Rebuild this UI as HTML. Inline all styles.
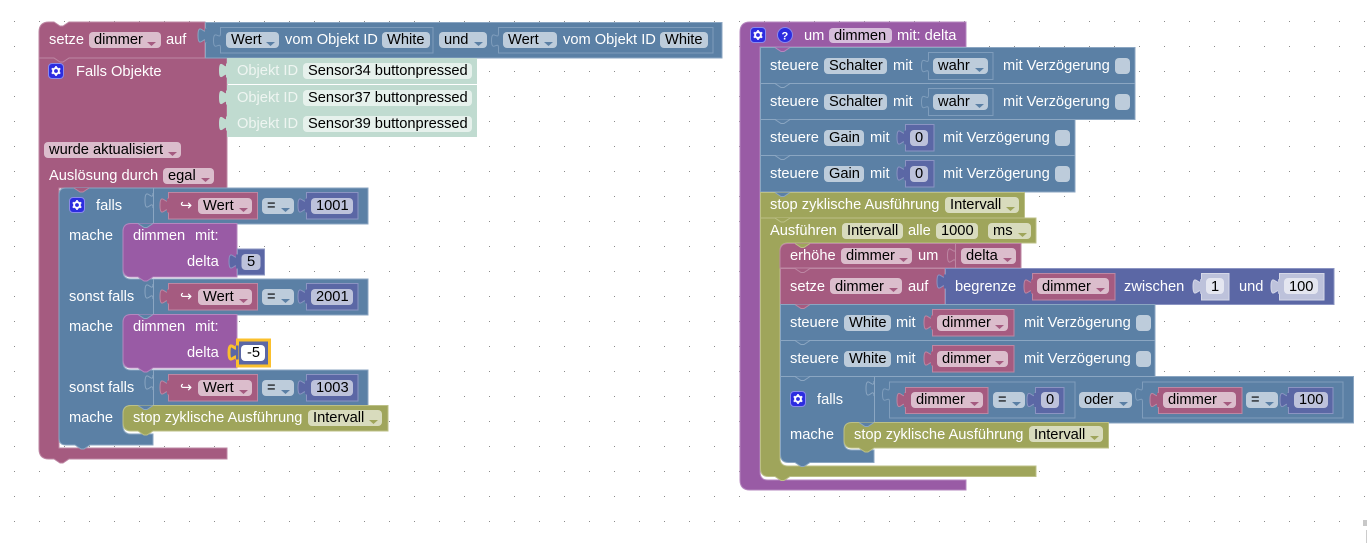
<!DOCTYPE html>
<html><head><meta charset="utf-8"><style>
html,body{margin:0;padding:0;background:#fff;width:1367px;height:543px;overflow:hidden}
svg{display:block}
text{font:14.67px "Liberation Sans",Arial,sans-serif;white-space:pre}
.w{fill:#fff}.k{fill:#000}.wf{fill:#eef5f1}
.P{fill:#a55b80;stroke:#bd87a3}.B{fill:#5b80a5;stroke:#8ba6c2}.U{fill:#995ba5;stroke:#b587bf}.O{fill:#9fa55b;stroke:#bcc087}.I{fill:#5b67a5;stroke:#8b94c2}
.L{fill:#bdc2db;stroke:#d5d8e8}
.ol{fill:none;stroke:#7f9dbc}
.fp{fill:#dbbdcc}.fb{fill:#bdccdb}.fo{fill:#d8dbbd}.fi{fill:#bdc2db}.fm{fill:#e6f1ec}.fu{fill:#d6bddb}.fl{fill:#e4e6f0}
</style></head><body>
<svg width="1367" height="543" viewBox="0 0 1367 543" xmlns="http://www.w3.org/2000/svg">
<defs>
<pattern id="d" x="14" y="21" width="25" height="25" patternUnits="userSpaceOnUse"><rect width="1" height="1" fill="#8a8a8a"/></pattern>
<g id="t"><path d="M0 0c0,10 -8,-8 -8,7.5 s 8,-2.5 8,7.5"/><rect x="-1" y="0.500" width="2.500" height="14" stroke="none"/></g>
<path id="n" d="M0 0l6 4h3l6-4"/>
<path id="a" d="M0 0h9l-4.5 4z"/>
<g id="g"><rect x=".5" y=".5" width="15" height="15" rx="3.5" fill="#2c2ce0" stroke="#8a8aec"/><circle cx="8" cy="8" r="2.9" fill="none" stroke="#fff" stroke-width="2"/><path d="M8 3v10M3.7 5.5l8.6 5M3.7 10.5l8.6-5" stroke="#fff" stroke-width="1.6" stroke-dasharray="1.8 6.4"/></g>
</defs>
<rect width="1367" height="543" fill="url(#d)"/>
<rect x="1363" y="520" width="4" height="6" fill="#c8c8c8"/><rect x="1366" y="530" width="1" height="13" fill="#ccc"/>

<!-- LEFT STACK -->
<path class="P" d="M49 22H54l6 4h3l6-4H205V58H227V188H59V448H227V459H69l-6 4h-3l-6-4H49q-10 0-10-10V32q0-10 10-10z"/>
<path d="M39.5 58H54l6 4h3l6-4H205" fill="none" stroke="#bd87a3"/>
<rect class="B" x="205.500" y="22.500" width="516.500" height="35.500"/>
<use href="#t" x="206" y="28" class="B"/>
<path class="ol" d="M220.500 27.500h212.500v25.500h-212.500v-5c0-8-7 5-7-7.500s7 1 7-7.500z"/>
<path class="ol" d="M498.500 27.500h214.500v25.500h-214.500v-5c0-8-7 5-7-7.500s7 1 7-7.500z"/>
<rect class="fb" x="226" y="32" width="53" height="16" rx="4"/><rect class="fb" x="382" y="32" width="48" height="16" rx="4"/><rect class="fb" x="439" y="32" width="48" height="16" rx="4"/><rect class="fb" x="503" y="32" width="54" height="16" rx="4"/><rect class="fb" x="660" y="32" width="48" height="16" rx="4"/>
<g fill="#5b80a5"><use href="#a" x="266" y="42"/><use href="#a" x="474" y="42"/><use href="#a" x="544" y="42"/></g>
<text class="w" x="49" y="44">setze</text><rect class="fp" x="89" y="32" width="72" height="16" rx="4"/><text class="k" x="94" y="44">dimmer</text><use href="#a" x="147" y="42" fill="#a55b80"/><text class="w" x="166" y="44">auf</text>
<text class="k" x="231" y="44">Wert</text><text class="w" x="285" y="44">vom Objekt ID</text><text class="k" x="387" y="44">White</text><text class="k" x="444" y="44">und</text><text class="k" x="508" y="44">Wert</text><text class="w" x="563" y="44">vom Objekt ID</text><text class="k" x="665" y="44">White</text>

<use href="#g" x="48" y="63"/><text class="w" x="76" y="76">Falls Objekte</text>
<g fill="#c0dbd0"><rect x="227" y="58" width="250" height="26"/><rect x="227" y="85" width="250" height="52"/><use href="#t" x="227" y="63"/><use href="#t" x="227" y="90"/><use href="#t" x="227" y="116"/></g>
<rect class="fm" x="303" y="63" width="169" height="16" rx="4"/><rect class="fm" x="303" y="90" width="169" height="16" rx="4"/><rect class="fm" x="303" y="116" width="169" height="16" rx="4"/>
<text class="wf" x="237" y="75">Objekt ID</text><text class="wf" x="237" y="102">Objekt ID</text><text class="wf" x="237" y="128">Objekt ID</text>
<text class="k" x="308" y="75">Sensor34 buttonpressed</text><text class="k" x="308" y="102">Sensor37 buttonpressed</text><text class="k" x="308" y="128">Sensor39 buttonpressed</text>
<rect class="fp" x="44" y="142" width="137" height="16" rx="4"/><text class="k" x="49" y="154">wurde aktualisiert</text><use href="#a" x="168" y="152" fill="#a55b80"/>
<text class="w" x="49" y="180">Auslösung durch</text><rect class="fp" x="163" y="168" width="51" height="16" rx="4"/><text class="k" x="168" y="180">egal</text><use href="#a" x="201" y="178" fill="#a55b80"/>

<path class="B" d="M66 188H368V224H131q-8 0-8 8V271q0 8 8 8H368V315H131q-8 0-8 8V362q0 8 8 8H368V405.500H131q-8 0-8 8V426q0 8 8 8H153V445H90l-6 4h-3l-6-4H66q-7 0-7-7V195q0-7 7-7z"/>
<use href="#n" x="74" y="188" class="P"/>
<path d="M153.500 188v36M153.500 279v36M153.500 370v36" stroke="#8ba6c2" fill="none"/>
<g fill="none" stroke="#8ba6c2"><use href="#t" x="153" y="193"/><use href="#t" x="153" y="284"/><use href="#t" x="153" y="375"/></g>
<use href="#g" x="69" y="197"/>
<text class="w" x="96" y="210">falls</text><text class="w" x="69" y="240">mache</text><text class="w" x="69" y="301">sonst falls</text><text class="w" x="69" y="331">mache</text><text class="w" x="69" y="392">sonst falls</text><text class="w" x="69" y="422">mache</text>

<!-- left rows -->
<g>
<rect class="P" x="168.500" y="192.500" width="89" height="26.500"/><use href="#t" x="168" y="198" class="P"/>
<text class="w" x="180" y="210">↪</text>
<rect class="fp" x="198" y="198" width="54" height="16" rx="4"/><text class="k" x="203" y="210">Wert</text><use href="#a" x="239" y="208" fill="#a55b80"/>
<rect class="fb" x="262" y="198" width="32" height="16" rx="4"/><text class="k" x="267" y="210">=</text><use href="#a" x="281" y="208" fill="#5b80a5"/>
<rect class="I" x="306.500" y="192.500" width="51.500" height="26.500"/><use href="#t" x="306" y="198" class="I"/>
<rect class="fi" x="311" y="198" width="42" height="16" rx="4"/><text class="k" x="316" y="210">1001</text>
</g>
<g>
<rect class="P" x="168.500" y="283.500" width="89" height="26.500"/><use href="#t" x="168" y="289" class="P"/>
<text class="w" x="180" y="301">↪</text>
<rect class="fp" x="198" y="289" width="54" height="16" rx="4"/><text class="k" x="203" y="301">Wert</text><use href="#a" x="239" y="299" fill="#a55b80"/>
<rect class="fb" x="262" y="289" width="32" height="16" rx="4"/><text class="k" x="267" y="301">=</text><use href="#a" x="281" y="299" fill="#5b80a5"/>
<rect class="I" x="306.500" y="283.500" width="51.500" height="26.500"/><use href="#t" x="306" y="289" class="I"/>
<rect class="fi" x="311" y="289" width="42" height="16" rx="4"/><text class="k" x="316" y="301">2001</text>
</g>
<g>
<rect class="P" x="168.500" y="374.500" width="89" height="26.500"/><use href="#t" x="168" y="380" class="P"/>
<text class="w" x="180" y="392">↪</text>
<rect class="fp" x="198" y="380" width="54" height="16" rx="4"/><text class="k" x="203" y="392">Wert</text><use href="#a" x="239" y="390" fill="#a55b80"/>
<rect class="fb" x="262" y="380" width="32" height="16" rx="4"/><text class="k" x="267" y="392">=</text><use href="#a" x="281" y="390" fill="#5b80a5"/>
<rect class="I" x="306.500" y="374.500" width="51.500" height="26.500"/><use href="#t" x="306" y="380" class="I"/>
<rect class="fi" x="311" y="380" width="42" height="16" rx="4"/><text class="k" x="316" y="392">1003</text>
</g>

<!-- dimmen 1 -->
<path class="U" d="M131 223.500H237V277H153l-6 4h-3l-6-4H131q-8 0-8-8V231.500q0-8 8-8z"/>
<use href="#n" x="138" y="223.500" class="B"/>
<text class="w" x="133" y="240">dimmen</text><text class="w" x="195" y="240">mit:</text><text class="w" x="187" y="266">delta</text>
<rect class="I" x="237.500" y="249" width="27" height="26"/><use href="#t" x="237" y="254" class="I"/>
<rect class="fi" x="241.500" y="254" width="19" height="16" rx="4"/><text class="k" x="247" y="266">5</text>
<!-- dimmen 2 -->
<path class="U" d="M131 314.500H237V368H153l-6 4h-3l-6-4H131q-8 0-8-8V322.500q0-8 8-8z"/>
<use href="#n" x="138" y="314.500" class="B"/>
<text class="w" x="133" y="331">dimmen</text><text class="w" x="195" y="331">mit:</text><text class="w" x="187" y="357">delta</text>
<rect x="237.500" y="340" width="32" height="26" fill="#5b67a5" stroke="#fbc02d" stroke-width="3"/><use href="#t" x="237" y="345" fill="#5b67a5" stroke="#fbc02d" stroke-width="3"/>
<rect x="241" y="345" width="24" height="16" rx="4" fill="#fff"/><text class="k" x="247" y="357">-5</text>
<!-- stop -->
<path class="O" d="M131 405.500H388V431H153l-6 4h-3l-6-4H131q-8 0-8-8V413.500q0-8 8-8z"/>
<use href="#n" x="138" y="405.500" class="B"/>
<text class="w" x="133" y="422">stop zyklische Ausführung</text><rect class="fo" x="308" y="410" width="74" height="16" rx="4"/><text class="k" x="313" y="422">Intervall</text><use href="#a" x="369" y="420" fill="#9fa55b"/>

<!-- RIGHT STACK -->
<path class="U" d="M750 22H966V47H760V472q0 8 8 8H966V490H750q-10 0-10-10V32q0-10 10-10z"/>
<use href="#g" x="750" y="27"/>
<circle cx="785" cy="35" r="7.5" fill="#2c2ce0" stroke="#8a8aec"/><text x="781.500" y="39.500" style="font-size:11px;font-weight:bold" class="w">?</text>
<text class="w" x="804" y="40">um</text><rect class="fu" x="829" y="28" width="63" height="15" rx="4"/><text class="k" x="834" y="40">dimmen</text><text class="w" x="897" y="40">mit: delta</text>

<rect class="B" x="760.500" y="47.500" width="374.500" height="36"/><use href="#n" x="775" y="47.500" class="U"/>
<rect class="B" x="760.500" y="83.500" width="374.500" height="36"/><use href="#n" x="775" y="83.500" class="B"/>
<rect class="B" x="760.500" y="119.500" width="314.500" height="36"/><use href="#n" x="775" y="119.500" class="B"/>
<rect class="B" x="760.500" y="155.500" width="314.500" height="36.500"/><use href="#n" x="775" y="155.500" class="B"/>

<text class="w" x="770" y="70">steuere</text><rect class="fb" x="824" y="58" width="63" height="16" rx="4"/><text class="k" x="829" y="70">Schalter</text><text class="w" x="893" y="70">mit</text>
<path class="ol" d="M928.500 52.500h64.500v27h-64.500v-6c0-8-7 5-7-7.500s7 1 7-7.500z"/><rect class="fb" x="933" y="58" width="55" height="16" rx="4"/><text class="k" x="938" y="70">wahr</text><use href="#a" x="975" y="68" fill="#5b80a5"/>
<text class="w" x="1003" y="70">mit Verzögerung</text><rect class="fb" x="1115" y="58" width="15" height="16" rx="4"/>

<text class="w" x="770" y="106">steuere</text><rect class="fb" x="824" y="94" width="63" height="16" rx="4"/><text class="k" x="829" y="106">Schalter</text><text class="w" x="893" y="106">mit</text>
<path class="ol" d="M928.500 88.500h64.500v27h-64.500v-6c0-8-7 5-7-7.500s7 1 7-7.500z"/><rect class="fb" x="933" y="94" width="55" height="16" rx="4"/><text class="k" x="938" y="106">wahr</text><use href="#a" x="975" y="104" fill="#5b80a5"/>
<text class="w" x="1003" y="106">mit Verzögerung</text><rect class="fb" x="1115" y="94" width="15" height="16" rx="4"/>

<text class="w" x="770" y="142">steuere</text><rect class="fb" x="824" y="130" width="40" height="16" rx="4"/><text class="k" x="829" y="142">Gain</text><text class="w" x="870" y="142">mit</text>
<rect class="I" x="905.500" y="124.500" width="28.500" height="26.500"/><use href="#t" x="905" y="130" class="I"/><rect class="fi" x="910" y="130" width="18" height="16" rx="4"/><text class="k" x="915" y="142">0</text>
<text class="w" x="943" y="142">mit Verzögerung</text><rect class="fb" x="1055" y="130" width="15" height="16" rx="4"/>

<text class="w" x="770" y="178">steuere</text><rect class="fb" x="824" y="166" width="40" height="16" rx="4"/><text class="k" x="829" y="178">Gain</text><text class="w" x="870" y="178">mit</text>
<rect class="I" x="905.500" y="160.500" width="28.500" height="26.500"/><use href="#t" x="905" y="166" class="I"/><rect class="fi" x="910" y="166" width="18" height="16" rx="4"/><text class="k" x="915" y="178">0</text>
<text class="w" x="943" y="178">mit Verzögerung</text><rect class="fb" x="1055" y="166" width="15" height="16" rx="4"/>

<!-- olive -->
<rect class="O" x="760.500" y="192.500" width="264" height="25.500"/><use href="#n" x="775" y="192.500" class="B"/>
<text class="w" x="770" y="209">stop zyklische Ausführung</text><rect class="fo" x="945" y="197" width="74" height="16" rx="4"/><text class="k" x="950" y="209">Intervall</text><use href="#a" x="1006" y="207" fill="#9fa55b"/>
<path class="O" d="M760.500 218H1036V243H788q-8 0-8 8V458q0 8 8 8H1036V476.500H790l-6 4h-3l-6-4H768.500q-8 0-8-8z"/><use href="#n" x="775" y="218" class="O"/>
<text class="w" x="770" y="235">Ausführen</text><rect class="fo" x="842" y="223" width="61" height="16" rx="4"/><text class="k" x="847" y="235">Intervall</text><text class="w" x="908" y="235">alle</text><rect class="fo" x="936" y="223" width="42" height="16" rx="4"/><text class="k" x="941" y="235">1000</text><rect class="fo" x="988" y="223" width="43" height="16" rx="4"/><text class="k" x="993" y="235">ms</text><use href="#a" x="1018" y="233" fill="#9fa55b"/>

<!-- erhöhe -->
<path class="P" d="M788 243.500H1021V268H780V251.500q0-8 8-8z"/><use href="#n" x="795" y="243.500" class="O"/>
<path d="M955.500 243.500v25" stroke="#bd87a3" fill="none"/><use href="#t" x="955.500" y="248" fill="none" stroke="#bd87a3"/>
<text class="w" x="790" y="260">erhöhe</text><rect class="fp" x="841" y="248" width="71" height="16" rx="4"/><text class="k" x="846" y="260">dimmer</text><use href="#a" x="899" y="258" fill="#a55b80"/><text class="w" x="918" y="260">um</text><rect class="fp" x="961" y="248" width="55" height="16" rx="4"/><text class="k" x="966" y="260">delta</text><use href="#a" x="1003" y="258" fill="#a55b80"/>
<!-- setze -->
<rect class="P" x="780.500" y="268.500" width="164.500" height="36"/><use href="#n" x="795" y="268.500" class="P"/>
<rect class="I" x="945.500" y="268.500" width="388.500" height="36"/><use href="#t" x="945" y="274" class="I"/>
<text class="w" x="790" y="291">setze</text><rect class="fp" x="830" y="278" width="72" height="16" rx="4"/><text class="k" x="835" y="291">dimmer</text><use href="#a" x="889" y="288" fill="#a55b80"/><text class="w" x="908" y="291">auf</text>
<text class="w" x="955" y="291">begrenze</text>
<rect class="P" x="1032.500" y="273.500" width="82.500" height="26.500"/><use href="#t" x="1032" y="279" class="P"/><rect class="fp" x="1037" y="278" width="72" height="16" rx="4"/><text class="k" x="1042" y="291">dimmer</text><use href="#a" x="1096" y="288" fill="#a55b80"/>
<text class="w" x="1124" y="291">zwischen</text>
<rect class="L" x="1201.500" y="273.500" width="27.500" height="26.500"/><use href="#t" x="1201" y="279" class="L"/><rect class="fl" x="1206" y="278" width="18" height="16" rx="4"/><text class="k" x="1211" y="291">1</text>
<text class="w" x="1239" y="291">und</text>
<rect class="L" x="1279.500" y="273.500" width="44.500" height="26.500"/><use href="#t" x="1279" y="279" class="L"/><rect class="fl" x="1284" y="278" width="34" height="16" rx="4"/><text class="k" x="1289" y="291">100</text>
<!-- steuere White -->
<rect class="B" x="780.500" y="304.500" width="374.500" height="36"/><use href="#n" x="795" y="304.500" class="P"/>
<rect class="B" x="780.500" y="340.500" width="374.500" height="36"/><use href="#n" x="795" y="340.500" class="B"/>
<text class="w" x="790" y="327">steuere</text><rect class="fb" x="844" y="315" width="47" height="16" rx="4"/><text class="k" x="849" y="327">White</text><text class="w" x="896" y="327">mit</text>
<rect class="P" x="932.500" y="309.500" width="81.500" height="26.500"/><use href="#t" x="932" y="315" class="P"/><rect class="fp" x="937" y="315" width="71" height="16" rx="4"/><text class="k" x="942" y="327">dimmer</text><use href="#a" x="995" y="325" fill="#a55b80"/>
<text class="w" x="1024" y="327">mit Verzögerung</text><rect class="fb" x="1136" y="315" width="15" height="16" rx="4"/>
<text class="w" x="790" y="363">steuere</text><rect class="fb" x="844" y="351" width="47" height="16" rx="4"/><text class="k" x="849" y="363">White</text><text class="w" x="896" y="363">mit</text>
<rect class="P" x="932.500" y="345.500" width="81.500" height="26.500"/><use href="#t" x="932" y="351" class="P"/><rect class="fp" x="937" y="351" width="71" height="16" rx="4"/><text class="k" x="942" y="363">dimmer</text><use href="#a" x="995" y="361" fill="#a55b80"/>
<text class="w" x="1024" y="363">mit Verzögerung</text><rect class="fb" x="1136" y="351" width="15" height="16" rx="4"/>
<!-- falls -->
<path class="B" d="M780.500 376.500H1353.500V423H852q-8 0-8 8V442q0 8 8 8H874V462.500H810l-6 4h-3l-6-4H788.500q-8 0-8-8z"/><use href="#n" x="795" y="376.500" class="B"/>
<path d="M874.500 377v46" stroke="#8ba6c2" fill="none"/><use href="#t" x="874" y="381" fill="none" stroke="#8ba6c2"/>
<use href="#g" x="790" y="391"/><text class="w" x="817" y="404">falls</text><text class="w" x="790" y="439">mache</text>
<path class="ol" d="M889.500 382h185.500v36h-185.500v-16c0-8-7 5-7-7.500s7 1 7-7.500z"/>
<path class="ol" d="M1142.500 382h200.500v36h-200.500v-16c0-8-7 5-7-7.500s7 1 7-7.500z"/>
<rect class="P" x="905.500" y="387.500" width="82.500" height="26"/><use href="#t" x="905" y="392.500" class="P"/><rect class="fp" x="911" y="392" width="72" height="16" rx="4"/><text class="k" x="916" y="404">dimmer</text><use href="#a" x="970" y="402" fill="#a55b80"/>
<rect class="fb" x="993" y="392" width="32" height="16" rx="4"/><text class="k" x="998" y="404">=</text><use href="#a" x="1012" y="402" fill="#5b80a5"/>
<rect class="I" x="1035.500" y="387.500" width="28.500" height="26"/><use href="#t" x="1035" y="392.500" class="I"/><rect class="fi" x="1041" y="392" width="18" height="16" rx="4"/><text class="k" x="1046" y="404">0</text>
<rect class="fb" x="1079" y="392" width="53" height="16" rx="4"/><text class="k" x="1084" y="404">oder</text><use href="#a" x="1119" y="402" fill="#5b80a5"/>
<rect class="P" x="1158.500" y="387.500" width="83.500" height="26"/><use href="#t" x="1158" y="392.500" class="P"/><rect class="fp" x="1163" y="392" width="73" height="16" rx="4"/><text class="k" x="1168" y="404">dimmer</text><use href="#a" x="1223" y="402" fill="#a55b80"/>
<rect class="fb" x="1246" y="392" width="32" height="16" rx="4"/><text class="k" x="1251" y="404">=</text><use href="#a" x="1265" y="402" fill="#5b80a5"/>
<rect class="I" x="1288.500" y="387.500" width="44.500" height="26"/><use href="#t" x="1288" y="392.500" class="I"/><rect class="fi" x="1294" y="392" width="34" height="16" rx="4"/><text class="k" x="1299" y="404">100</text>
<!-- inner stop -->
<path class="O" d="M852 422.500H1108.500V448H874l-6 4h-3l-6-4H852q-8 0-8-8V430.500q0-8 8-8z"/><use href="#n" x="859" y="422.500" class="B"/>
<text class="w" x="854" y="439">stop zyklische Ausführung</text><rect class="fo" x="1029" y="426" width="74" height="16" rx="4"/><text class="k" x="1034" y="439">Intervall</text><use href="#a" x="1090" y="436" fill="#9fa55b"/>
</svg>
</body></html>
